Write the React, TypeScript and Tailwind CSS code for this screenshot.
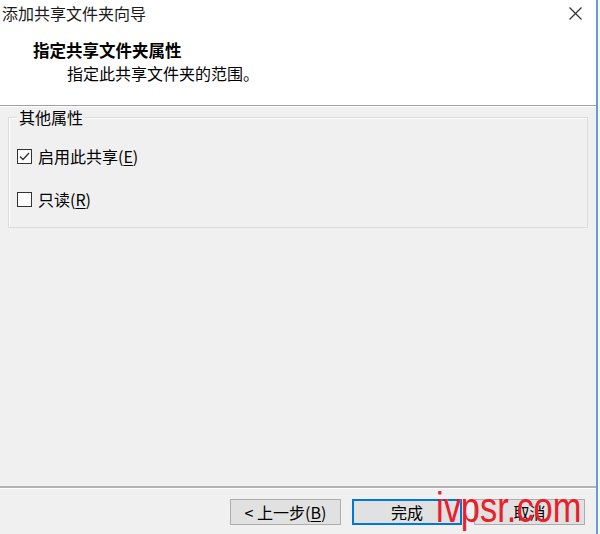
export default function App() {
  return (
    <div className="w-[600px] h-[534px] flex bg-[#f0f0f0] font-['Noto_Sans_CJK_SC',sans-serif] text-[16px] text-black overflow-hidden relative">
      {/* Dialog body */}
      <div className="w-[596px] h-full flex flex-col">
        {/* Header */}
        <div className="h-[105px] bg-white flex flex-col">
          <div className="h-[26px] flex items-center justify-between pl-[2px] pr-[14px]">
            <span className="leading-[20px] text-[#1a1a1a]">添加共享文件夹向导</span>
            <svg width="13" height="13" viewBox="0 0 13 13" stroke="#333" strokeWidth="1.2" className="mt-[1px]">
              <line x1="0.5" y1="0.5" x2="12.5" y2="12.5" />
              <line x1="12.5" y1="0.5" x2="0.5" y2="12.5" />
            </svg>
          </div>
          <div className="pl-[33px] mt-[14px] leading-[20px] font-bold text-[16.5px]">指定共享文件夹属性</div>
          <div className="pl-[67px] mt-[3px] leading-[20px]">指定此共享文件夹的范围。</div>
        </div>
        <div className="h-[1px] bg-[#a0a0a0]" />
        <div className="h-[1px] bg-white" />

        {/* Content */}
        <div className="flex-1 px-[8px] pt-[10px]">
          <div className="relative h-[111px] border border-[#dcdcdc] shadow-[inset_1px_1px_0_#ffffff] pl-[8px] pt-[28px] flex flex-col gap-[23px]">
            <span className="absolute -top-[11px] left-[8px] px-[2px] bg-[#f0f0f0] leading-[20px]">其他属性</span>
            <label className="flex items-center h-[20px]">
              <span className="w-[15px] h-[15px] border border-[#333] bg-white flex items-center justify-center">
                <svg width="11" height="9" viewBox="0 0 11 9" fill="none" stroke="#333" strokeWidth="1.3">
                  <polyline points="1,4.5 4,7.5 10,1" />
                </svg>
              </span>
              <span className="ml-[6px] leading-[20px]">
                启用此共享(<span className="underline underline-offset-2">E</span>)
              </span>
            </label>
            <label className="flex items-center h-[20px]">
              <span className="w-[15px] h-[15px] border border-[#333] bg-white" />
              <span className="ml-[6px] leading-[20px]">
                只读(<span className="underline underline-offset-2">R</span>)
              </span>
            </label>
          </div>
        </div>

        <div className="h-[2px] bg-[#b4b4b4]" />
        <div className="h-[1px] bg-white" />

        {/* Buttons */}
        <div className="h-[45px] flex justify-end items-start pt-[10px] pr-[11px]">
          <button className="w-[111px] h-[26px] bg-[#e1e1e1] border border-[#adadad] leading-[20px]">
            &lt; 上一步(<span className="underline underline-offset-2">B</span>)
          </button>
          <button className="ml-[11px] w-[110px] h-[26px] bg-[#e1e1e1] border-2 border-[#0078d7] leading-[20px]">
            完成
          </button>
          <button className="ml-[12px] w-[111px] h-[26px] bg-[#e1e1e1] border border-[#adadad] leading-[20px]">
            取消
          </button>
        </div>
      </div>

      {/* Window frame */}
      <div className="w-[2px] h-full bg-[#6b9bd6]" />
      <div className="w-[2px] h-full bg-[#f7f7f7]" />

      {/* Watermark */}
      <span className="absolute left-[436px] top-[487px] font-['Liberation_Sans',sans-serif] text-[42px] leading-none text-[#e8202a] origin-left scale-x-[0.82] pointer-events-none">
        ivpsr.com
      </span>
    </div>
  );
}
